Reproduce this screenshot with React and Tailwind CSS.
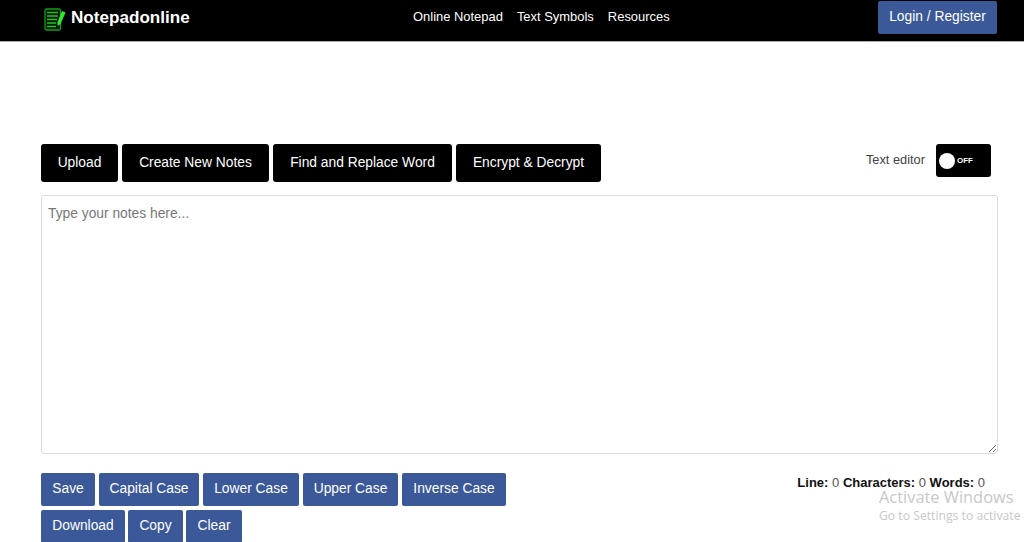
const TOP_ACTIONS = [
  { label: 'Upload', width: 'w-[77px]' },
  { label: 'Create New Notes', width: 'w-[147px]' },
  { label: 'Find and Replace Word', width: 'w-[179px]' },
  { label: 'Encrypt & Decrypt', width: 'w-[145px]' },
]

const ROW_ONE = [
  { label: 'Save', width: 'w-[54px]' },
  { label: 'Capital Case', width: 'w-[100px]' },
  { label: 'Lower Case', width: 'w-[96px]' },
  { label: 'Upper Case', width: 'w-[95px]' },
  { label: 'Inverse Case', width: 'w-[104px]' },
]

const ROW_TWO = [
  { label: 'Download', width: 'w-[84px]' },
  { label: 'Copy', width: 'w-[55px]' },
  { label: 'Clear', width: 'w-[56px]' },
]

function Logo() {
  return (
    <svg width="22" height="23" viewBox="0 0 22 23" fill="none" className="mt-[2px] shrink-0">
      <rect x="1" y="1" width="15.500" height="21" rx="1.500" stroke="#10a010" strokeWidth="1.300" fill="#021502" />
      <path d="M3 4.500h11M3 8h11M3 11.500h10M3 15h9M3 18.500h9" stroke="#1fc81f" strokeWidth="1.600" />
      <path d="M18 3l3.500 1.400-5 11.500-2.800 2-0.400-3.500z" fill="#2fe82f" />
    </svg>
  )
}

function BlueButton({ label, width }) {
  return (
    <button className={`${width} h-[33px] shrink-0 rounded-[2px] bg-[#3b5998] text-[13.800px] text-white`}>
      {label}
    </button>
  )
}

export default function App() {
  return (
    <div className="relative h-[542px] w-[1024px] overflow-hidden bg-white font-['Liberation_Sans',Arial,sans-serif]">
      {/* Header */}
      <header className="flex h-[42px] items-start border-b border-[#aaa] bg-black pl-[44px]">
        <div className="flex h-[36px] w-[369px] items-center gap-[5px]">
          <Logo />
          <span className="text-[17.100px] font-bold text-white">Notepadonline</span>
        </div>
        <nav className="flex h-[34px] w-[465px] items-center gap-[14px] text-[12.950px] text-white">
          <span>Online Notepad</span>
          <span>Text Symbols</span>
          <span>Resources</span>
        </nav>
        <button className="mt-px h-[33px] w-[119px] rounded-[2px] bg-[#3b5998] text-[13.800px] text-white">
          Login / Register
        </button>
      </header>

      <main className="pl-[41px] pr-[26px] pt-[102px]">
        {/* Top actions */}
        <div className="flex items-start">
          <div className="flex gap-1">
            {TOP_ACTIONS.map(a => (
              <button key={a.label} className={`${a.width} h-[38px] rounded-[3px] bg-black text-[13.800px] text-white`}>
                {a.label}
              </button>
            ))}
          </div>
          <span className="ml-auto pt-[6px] text-[12.800px] text-[#444]">Text editor</span>
          <div className="ml-[11px] mr-[7px] flex h-[33px] w-[55px] items-center gap-[2px] rounded-[3px] bg-black pl-[3px]">
            <span className="h-[16px] w-[16px] rounded-full bg-white" />
            <span className="text-[8px] font-bold text-white">OFF</span>
          </div>
        </div>

        {/* Editor */}
        <textarea
          placeholder="Type your notes here..."
          className="mt-[13px] block h-[259px] w-[957px] rounded-[3px] border border-[#ddd] px-[6px] py-[8px] text-[13.800px] text-[#333] placeholder:text-[#777]"
        />

        {/* Bottom tools */}
        <div className="mt-[19px] flex items-start justify-between">
          <div className="flex flex-col gap-1">
            <div className="flex gap-1">
              {ROW_ONE.map(b => <BlueButton key={b.label} {...b} />)}
            </div>
            <div className="flex gap-[3px]">
              {ROW_TWO.map(b => <BlueButton key={b.label} {...b} />)}
            </div>
          </div>
          <p className="mr-[13px] pt-[2px] text-[13px] leading-[15px] text-[#555]">
            <b className="text-[#111]">Line:</b> 0 <b className="text-[#111]">Characters:</b> 0 <b className="text-[#111]">Words:</b> 0
          </p>
        </div>
      </main>

      {/* Windows watermark */}
      <div className="absolute left-[879px] top-[491px] whitespace-nowrap font-['Open_Sans',sans-serif] text-[#c8c8c8]">
        <div className="text-[16.400px] leading-[12px]">Activate Windows</div>
        <div className="mt-[5px] text-[12.200px] leading-[16px]">Go to Settings to activate</div>
      </div>
    </div>
  )
}
